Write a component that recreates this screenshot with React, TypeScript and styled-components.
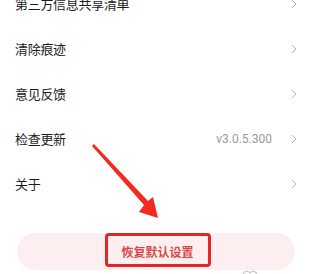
import styled, { createGlobalStyle } from "styled-components";

const GlobalStyle = createGlobalStyle`
  html, body {
    margin: 0;
    padding: 0;
    background: #ffffff;
    overflow: hidden;
  }
  body {
    font-family: "Noto Sans CJK SC", "Noto Sans", sans-serif;
  }
`;

const Page = styled.div`
  position: relative;
  width: 312px;
  height: 274px;
  overflow: hidden;
  background: #ffffff;
`;

const List = styled.div`
  display: flex;
  flex-direction: column;
  margin-top: -19px;
`;

const Row = styled.div`
  display: flex;
  align-items: center;
  height: 45px;
  padding: 0 15px;
`;

const Label = styled.span`
  flex: 1;
  font-size: 13px;
  color: #1c1c1c;
  letter-spacing: -0.3px;
`;

const Value = styled.span`
  font-family: "Roboto", "Noto Sans", sans-serif;
  font-size: 12px;
  color: #9a9a9a;
  margin-right: 19px;
`;

const Chevron = styled.svg`
  width: 6px;
  height: 10px;
  flex: none;
`;

const ResetBar = styled.div`
  position: relative;
  margin: 27px 17px 0;
  height: 37px;
  border-radius: 19px;
  background: #fdefef;
  display: flex;
  align-items: center;
  justify-content: center;
`;

const ResetText = styled.span`
  font-size: 12px;
  font-weight: 700;
  color: #d84848;
  margin-left: 3px;
  margin-top: 0px;
`;

const Highlight = styled.div`
  position: absolute;
  top: 0;
  left: 88px;
  width: 100px;
  height: 28px;
  border: 3px solid #e02626;
  border-radius: 4px;
`;

const Annotation = styled.svg`
  position: absolute;
  left: 0;
  top: 0;
  width: 312px;
  height: 274px;
  pointer-events: none;
`;

const items: { label: string; value?: string }[] = [
  { label: "第三方信息共享清单" },
  { label: "清除痕迹" },
  { label: "意见反馈" },
  { label: "检查更新", value: "v3.0.5.300" },
  { label: "关于" },
];

function Arrow() {
  return (
    <Chevron viewBox="0 0 6 10">
      <path d="M1 1 L5 5 L1 9" fill="none" stroke="#b4b4b4" strokeWidth="1" />
    </Chevron>
  );
}

export default function App() {
  return (
    <>
      <GlobalStyle />
      <Page>
        <List>
          {items.map((it) => (
            <Row key={it.label}>
              <Label>{it.label}</Label>
              {it.value && <Value>{it.value}</Value>}
              <Arrow />
            </Row>
          ))}
        </List>
        <ResetBar>
          <ResetText>恢复默认设置</ResetText>
          <Highlight />
        </ResetBar>
        <Annotation viewBox="0 0 312 274">
          <polygon
            points="92,146 94,144 148,201 153,197 158,218 139,212 144,205"
            fill="#f22a20"
          />
          <path
            d="M243 274 a4 4 0 0 1 7 -1 a4 4 0 0 1 7 1"
            fill="none"
            stroke="#c8c8c8"
            strokeWidth="1.2"
          />
        </Annotation>
      </Page>
    </>
  );
}
